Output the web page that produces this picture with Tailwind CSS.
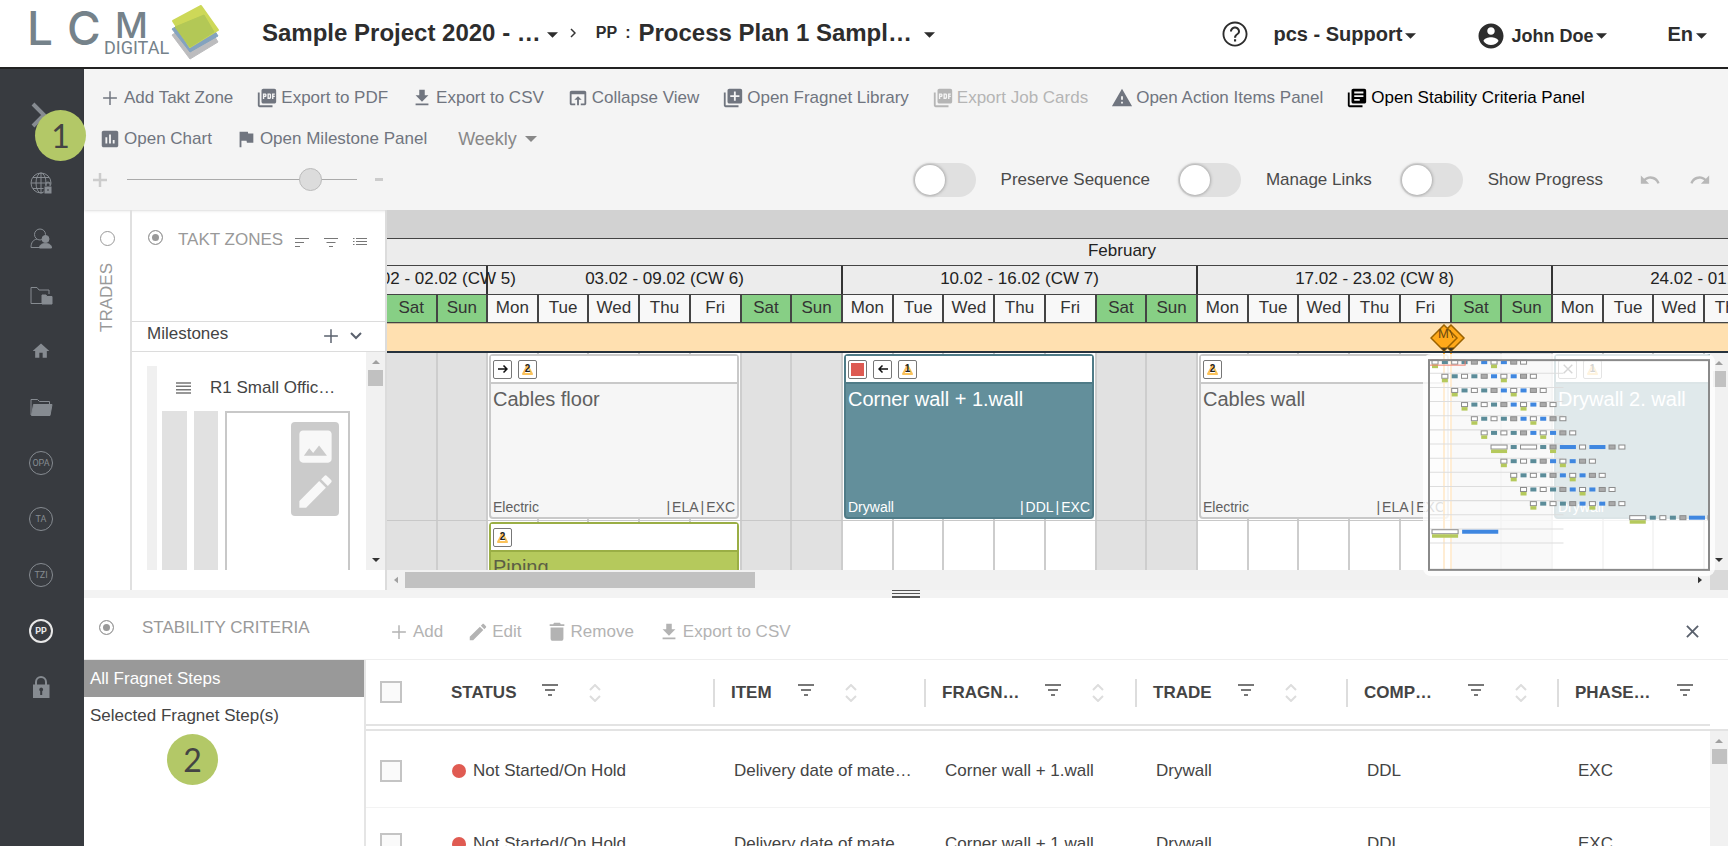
<!DOCTYPE html>
<html lang="en">
<head>
    <meta charset="UTF-8">
    <meta name="viewport" content="width=device-width, initial-scale=1.0">
    <title>LCM Digital - Process Plan</title>
    <script src="https://cdn.jsdelivr.net/npm/@tailwindcss/browser@4"></script>
</head>
<body class="h-screen overflow-hidden flex flex-col bg-white text-[17px] leading-5 text-[#444] font-['Liberation_Sans',Arial,sans-serif]">
    <!-- Icon sprite -->
    <svg class="hidden">
        <symbol id="add" viewBox="0 0 24 24"><path d="M19.500 12.800h-6.700v6.700h-1.600v-6.700H4.500v-1.600h6.700V4.500h1.600v6.700h6.700z"/></symbol>
        <symbol id="pdf" viewBox="0 0 24 24"><path d="M20 2H8c-1.100 0-2 .9-2 2v12c0 1.100.9 2 2 2h12c1.100 0 2-.9 2-2V4c0-1.100-.9-2-2-2zm-8.500 7.500c0 .83-.67 1.500-1.500 1.500H9v2H7.500V7H10c.83 0 1.500.67 1.500 1.500v1zm5 2c0 .83-.67 1.500-1.500 1.500h-2.500V7H15c.83 0 1.500.67 1.500 1.500v3zm4-3H19v1h1.500V11H19v2h-1.500V7h3v1.500zM9 9.500h1v-1H9v1zM4 6H2v14c0 1.100.9 2 2 2h14v-2H4V6zm10 5.500h1v-3h-1v3z"/></symbol>
        <symbol id="download" viewBox="0 0 24 24"><path d="M19 9h-4V3H9v6H5l7 7 7-7zM5 18v2h14v-2H5z"/></symbol>
        <symbol id="collapse" viewBox="0 0 24 24"><path d="M19 4H5c-1.110 0-2 .9-2 2v12c0 1.100.89 2 2 2h4v-2H5V8h14v10h-4v2h4c1.100 0 2-.9 2-2V6c0-1.100-.89-2-2-2zm-7 6l-4 4h3v6h2v-6h3l-4-4z"/></symbol>
        <symbol id="library" viewBox="0 0 24 24"><path d="M4 6H2v14c0 1.100.9 2 2 2h14v-2H4V6zm16-4H8c-1.100 0-2 .9-2 2v12c0 1.100.9 2 2 2h12c1.100 0 2-.9 2-2V4c0-1.100-.9-2-2-2zm-1 9h-4v4h-2v-4H9V9h4V5h2v4h4v2z"/></symbol>
        <symbol id="books" viewBox="0 0 24 24"><path d="M4 6H2v14c0 1.100.9 2 2 2h14v-2H4V6zm16-4H8c-1.100 0-2 .9-2 2v12c0 1.100.9 2 2 2h12c1.100 0 2-.9 2-2V4c0-1.100-.9-2-2-2zm-1 9H9V9h10v2zm-4 4H9v-2h6v2zm4-8H9V5h10v2z"/></symbol>
        <symbol id="warning" viewBox="0 0 24 24"><path d="M1 21h22L12 2 1 21zm12-3h-2v-2h2v2zm0-4h-2v-4h2v4z"/></symbol>
        <symbol id="chart" viewBox="0 0 24 24"><path d="M19 3H5c-1.100 0-2 .9-2 2v14c0 1.100.9 2 2 2h14c1.100 0 2-.9 2-2V5c0-1.100-.9-2-2-2zM9 17H7v-7h2v7zm4 0h-2V7h2v10zm4 0h-2v-4h2v4z"/></symbol>
        <symbol id="flag" viewBox="0 0 24 24"><path d="M14.400 6L14 4H5v17h2v-7h5.600l.4 2h7V6z"/></symbol>
        <symbol id="help" viewBox="0 0 24 24"><path d="M11.200 18h1.700v-1.900h-1.700V18zM12 2C6.480 2 2 6.480 2 12s4.480 10 10 10 10-4.480 10-10S17.520 2 12 2zm0 18.500c-4.700 0-8.500-3.800-8.500-8.500S7.300 3.500 12 3.500s8.500 3.800 8.500 8.500-3.800 8.500-8.500 8.500zM12 6c-2.210 0-4 1.790-4 4h1.600c0-1.300 1.100-2.400 2.400-2.400s2.400 1.100 2.400 2.400c0 2-3.200 1.900-3.200 5h1.700c0-2.250 3.100-2.500 3.100-5 0-2.210-1.790-4-4-4z"/></symbol>
        <symbol id="account" viewBox="0 0 24 24"><path d="M12 2C6.480 2 2 6.480 2 12s4.480 10 10 10 10-4.480 10-10S17.520 2 12 2zm0 3c1.660 0 3 1.340 3 3s-1.340 3-3 3-3-1.340-3-3 1.340-3 3-3zm0 14.200c-2.500 0-4.710-1.280-6-3.220.03-1.990 4-3.080 6-3.080 1.990 0 5.970 1.090 6 3.080-1.290 1.940-3.500 3.220-6 3.220z"/></symbol>
        <symbol id="undo" viewBox="0 0 24 24"><path d="M12.500 8c-2.650 0-5.050.99-6.900 2.600L2 7v9h9l-3.620-3.620c1.390-1.160 3.160-1.880 5.120-1.880 3.540 0 6.550 2.310 7.600 5.500l2.370-.78C21.080 11.030 17.150 8 12.500 8z"/></symbol>
        <symbol id="redo" viewBox="0 0 24 24"><path d="M18.400 10.600C16.550 8.990 14.150 8 11.500 8c-4.650 0-8.580 3.030-9.960 7.220L3.900 16c1.050-3.190 4.050-5.500 7.600-5.500 1.950 0 3.730.72 5.120 1.880L13 16h9V7l-3.600 3.600z"/></symbol>
        <symbol id="edit" viewBox="0 0 24 24"><path d="M3 17.250V21h3.750L17.810 9.940l-3.750-3.750L3 17.250zM20.710 7.040c.39-.39.39-1.020 0-1.410l-2.340-2.340c-.39-.39-1.020-.39-1.410 0l-1.830 1.830 3.750 3.750 1.830-1.830z"/></symbol>
        <symbol id="trash" viewBox="0 0 24 24"><path d="M5 19c0 1.600.9 2.500 2.400 2.500h9.200c1.500 0 2.400-.9 2.400-2.500V7H5v12zM20 3.500h-3.800L15.200 2H8.800l-1 1.500H4v2h16z"/></symbol>
        <symbol id="image" viewBox="0 0 24 24"><path d="M21 19V5c0-1.100-.9-2-2-2H5c-1.100 0-2 .9-2 2v14c0 1.100.9 2 2 2h14c1.100 0 2-.9 2-2zM5.500 17.200l3-4.200 2.200 2.600 3.300-4.100 4.400 5.700z"/></symbol>
        <symbol id="home" viewBox="0 0 24 24"><path d="M10 20v-6h4v6h5v-8h3L12 3 2 12h3v8z"/></symbol>
        <symbol id="caret" viewBox="0 0 12 6"><path d="M0 0h12L6 6z"/></symbol>
        <symbol id="caret-left" viewBox="0 0 6 10"><path d="M6 0v10L0 5z"/></symbol>
        <symbol id="filter" viewBox="0 0 16 12"><path d="M0 0h16v2H0zM3 5h10v2H3zM6 10h4v2H6z"/></symbol>
        <symbol id="sort" viewBox="0 0 12 18"><path d="M1 6l5-5 5 5M1 12l5 5 5-5" fill="none" stroke="currentColor" stroke-width="2"/></symbol>
        <symbol id="close" viewBox="0 0 14 14"><path d="M1 1l12 12M13 1L1 13" fill="none" stroke="currentColor" stroke-width="2"/></symbol>
        <symbol id="alert" viewBox="0 0 13 13"><path d="M6.500 2.500L11 11H2z" fill="none" stroke="#fbc25a" stroke-width="2" stroke-linejoin="round"/></symbol>
    </svg>

    <header class="h-[69px] shrink-0 flex items-center pr-[21px] pb-0.5 border-b-2 border-[#222] text-[#2d2d2d] font-bold">
        <a href="#" aria-label="LCM Digital" class="w-[262px] shrink-0 h-[60px]">
            <svg viewBox="0 2 262 60" class="w-[262px] h-[60px]">
                <path d="M172 34L202 15L218 41L190 58Z" fill="#bcbcbe" stroke="#bcbcbe" stroke-linejoin="round"/>
                <path d="M172 28L202 10L218 35L190 51Z" fill="#84a3bf" stroke="#84a3bf" stroke-linejoin="round"/>
                <path d="M173 20L201 5L218 29L190 46Z" fill="#cdd858" stroke="#cdd858" stroke-width="2" stroke-linejoin="round"/>
                <path d="M175 26L204 14L214 31L190 46Z" fill="#b3c856" stroke="#b3c856" stroke-linejoin="round"/>
                <g fill="#75828a" class="font-['Inter',sans-serif] font-medium">
                    <text x="27" y="44" font-size="46">L</text>
                    <text x="67" y="44" font-size="46">C</text>
                    <text x="115" y="37" font-size="36">M</text>
                    <text x="104" y="53" font-size="18" class="font-['Roboto',sans-serif] font-normal">DIGITAL</text>
                </g>
            </svg>
        </a>
        <button class="flex items-center gap-1.5 text-2xl">Sample Project 2020 - … <svg class="w-[11px] h-1.5 mt-1 fill-current"><use href="#caret"/></svg></button>
        <svg viewBox="0 0 6 10" class="w-1.5 h-2.5 ml-3 mr-5"><path d="M1 1l4 4-4 4" fill="none" stroke="#333" stroke-width="1.500"/></svg>
        <span class="flex gap-2 mr-2 text-base">PP <span>:</span></span>
        <button class="flex items-center gap-3 text-2xl">Process Plan 1 Sampl… <svg class="w-[11px] h-1.5 mt-1 fill-current"><use href="#caret"/></svg></button>
        <div class="ml-auto flex items-center gap-15 pt-0.5">
            <div class="flex items-center gap-6">
                <button aria-label="Help"><svg class="size-[30px] fill-current"><use href="#help"/></svg></button>
                <button class="flex items-center gap-[3px] text-xl">pcs - Support <svg class="w-[11px] h-1.5 mt-1 fill-current"><use href="#caret"/></svg></button>
            </div>
            <button class="flex items-center gap-[3px] text-lg pt-1"><svg class="size-[30px] mr-0.5 fill-current"><use href="#account"/></svg>John Doe <svg class="w-[11px] h-1.5 fill-current"><use href="#caret"/></svg></button>
            <button class="flex items-center gap-[3px] text-xl">En <svg class="w-[11px] h-1.5 mt-1 fill-current"><use href="#caret"/></svg></button>
        </div>
    </header>

    <div class="flex-1 min-h-0 flex relative">
        <!-- Sidebar -->
        <nav class="w-[84px] shrink-0 bg-[#383b40] flex flex-col items-center gap-8 pt-[34px] pr-0.5 text-[#868b91]">
            <a href="#" aria-label="Expand" class="h-6 flex items-center"><svg viewBox="0 0 16 26" class="w-4 h-[26px] mr-1"><path d="M2 2l11 11L2 24" fill="none" stroke="currentColor" stroke-width="4"/></svg></a>
            <div class="flex flex-col gap-8 pt-3">
                <a href="#" aria-label="World"><svg viewBox="0 0 24 24" class="size-6" fill="none" stroke="currentColor"><circle cx="12" cy="12" r="10"/><ellipse cx="12" cy="12" rx="5" ry="10"/><path d="M12 2v20M2 12h20M4 6.500h16M4 17.500h16"/><path d="M15 15h8v8h-8z" fill="currentColor" stroke="#383b40"/><path d="M17 15v-2a2 2 0 0 1 4 0v2"/><path d="M19 18v2" stroke="#383b40"/></svg></a>
                <a href="#" aria-label="Users"><svg viewBox="0 0 24 24" class="size-6" fill="none" stroke="currentColor"><circle cx="11" cy="7.500" r="5.500"/><path d="M12 20.500H2c0-5 2-7.500 6-8.500"/><circle cx="16.500" cy="12" r="3.500" fill="currentColor"/><path d="M10.500 21c0-3.500 3-4.500 6-4.500s6 1 6 4.500z" fill="currentColor"/></svg></a>
                <a href="#" aria-label="Folders"><svg viewBox="0 0 24 24" class="size-6" fill="none" stroke="currentColor"><path d="M13 20.500H2v-16h6l2 2.500h10v4"/><path d="M13 12h4l1 1.500h5V21H13z" fill="currentColor"/></svg></a>
                <a href="#" aria-label="Home"><svg class="size-6 p-0.5 fill-current"><use href="#home"/></svg></a>
                <a href="#" aria-label="Files"><svg viewBox="0 0 24 24" class="size-6" fill="none" stroke="currentColor"><path d="M2 20V4.500h6.500l2 2h10V9"/><path d="M4.500 9.500h18.500L21 20.500H2.500z" fill="currentColor"/></svg></a>
                <a href="#" class="size-6 rounded-full border border-current flex items-center justify-center text-[9px] leading-none font-['Roboto',sans-serif]">OPA</a>
                <a href="#" class="size-6 rounded-full border border-current flex items-center justify-center text-[9px] leading-none font-['Roboto',sans-serif]">TA</a>
                <a href="#" class="size-6 rounded-full border border-current flex items-center justify-center text-[9px] leading-none font-['Roboto',sans-serif]">TZI</a>
                <a href="#" class="size-6 rounded-full border-2 border-current flex items-center justify-center text-[9px] leading-none font-bold text-[#e8e8e8] font-['Roboto',sans-serif]">PP</a>
                <a href="#" aria-label="Lock"><svg viewBox="0 0 24 24" class="size-6"><path d="M7 11V7a5 5 0 0 1 10 0v4" fill="none" stroke="currentColor" stroke-width="2"/><path d="M4 9.500h16.500V23H4z" fill="currentColor"/><path d="M12.200 12.500a2 2 0 0 1 1 3.700V20h-2v-3.800a2 2 0 0 1 1-3.700z" fill="#383b40"/></svg></a>
            </div>
        </nav>
        <span class="absolute z-10 left-[35px] top-[41px] size-[51px] rounded-full bg-[#b3c867] flex items-center justify-center text-[32px] text-[#444] font-['Lato',sans-serif]">1</span>

        <main class="flex-1 min-w-0 flex flex-col">
            <!-- Toolbar -->
            <section class="shrink-0 bg-[#f4f4f4] pt-2 pb-2.5 px-[15px] text-[#70757f] shadow-sm">
                <div class="flex flex-wrap gap-x-[23px]">
                    <button class="h-[41px] flex items-center gap-[3px]"><svg class="size-[22px] fill-current"><use href="#add"/></svg>Add Takt Zone</button>
                    <button class="h-[41px] flex items-center gap-[3px]"><svg class="size-[22px] fill-current"><use href="#pdf"/></svg>Export to PDF</button>
                    <button class="h-[41px] flex items-center gap-[3px]"><svg class="size-[22px] fill-current"><use href="#download"/></svg>Export to CSV</button>
                    <button class="h-[41px] flex items-center gap-[3px]"><svg class="size-[22px] fill-current"><use href="#collapse"/></svg>Collapse View</button>
                    <button class="h-[41px] flex items-center gap-[3px]"><svg class="size-[22px] fill-current"><use href="#library"/></svg>Open Fragnet Library</button>
                    <button class="h-[41px] flex items-center gap-[3px] text-[#b5b5b5]" disabled><svg class="size-[22px] fill-current"><use href="#pdf"/></svg>Export Job Cards</button>
                    <button class="h-[41px] flex items-center gap-[3px]"><svg class="size-[22px] fill-current"><use href="#warning"/></svg>Open Action Items Panel</button>
                    <button class="h-[41px] flex items-center gap-[3px] text-black"><svg class="size-[22px] fill-current"><use href="#books"/></svg>Open Stability Criteria Panel</button>
                    <button class="h-[41px] flex items-center gap-[3px]"><svg class="size-[22px] fill-current"><use href="#chart"/></svg>Open Chart</button>
                    <button class="h-[41px] flex items-center gap-[3px]"><svg class="size-[22px] fill-current"><use href="#flag"/></svg>Open Milestone Panel</button>
                    <div class="h-[41px] flex items-center gap-2 pl-2 text-lg text-[#888]">
                        <select aria-label="Time scale" class="appearance-none bg-transparent"><option>Weekly</option></select>
                        <svg class="w-3 h-1.5 fill-current"><use href="#caret"/></svg>
                    </div>
                </div>
                <div class="h-[41px] flex items-center">
                    <button aria-label="Zoom in" class="-ml-2 mr-[18px] text-[#ccc]"><svg viewBox="0 0 14 14" class="w-[18px] h-3.5"><path d="M7 0v14M0 7h14" stroke="currentColor" stroke-width="2.500"/></svg></button>
                    <input type="range" aria-label="Zoom" value="83" class="w-[230px] h-px appearance-none bg-[#aaa] [&::-webkit-slider-thumb]:appearance-none [&::-webkit-slider-thumb]:size-[23px] [&::-webkit-slider-thumb]:rounded-full [&::-webkit-slider-thumb]:bg-[#dcdcdc] [&::-webkit-slider-thumb]:border [&::-webkit-slider-thumb]:border-[#bbb]">
                    <button aria-label="Zoom out" class="ml-[18px]"><span class="block w-2 h-[3px] bg-[#ccc]"></span></button>
                    <div class="ml-auto flex items-center gap-7 text-[#4a4a4a]">
                        <label class="flex items-center gap-[25px]"><input type="checkbox" class="appearance-none w-[63px] h-[34px] rounded-full bg-[#e0e0e0] p-0.5 before:block before:size-[30px] before:rounded-full before:bg-white before:shadow-[0_0_3px_1px_#aaa]">Preserve Sequence</label>
                        <label class="flex items-center gap-[25px]"><input type="checkbox" class="appearance-none w-[63px] h-[34px] rounded-full bg-[#e0e0e0] p-0.5 before:block before:size-[30px] before:rounded-full before:bg-white before:shadow-[0_0_3px_1px_#aaa]">Manage Links</label>
                        <label class="flex items-center gap-[25px]"><input type="checkbox" class="appearance-none w-[63px] h-[34px] rounded-full bg-[#e0e0e0] p-0.5 before:block before:size-[30px] before:rounded-full before:bg-white before:shadow-[0_0_3px_1px_#aaa]">Show Progress</label>
                        <div class="flex gap-7 pl-2 pr-0.5 text-[#b8b8b8]">
                            <button aria-label="Undo"><svg class="size-[22px] fill-current"><use href="#undo"/></svg></button>
                            <button aria-label="Redo"><svg class="size-[22px] fill-current"><use href="#redo"/></svg></button>
                        </div>
                    </div>
                </div>
            </section>

            <!-- Plan -->
            <section class="h-[380px] shrink-0 flex">
                <div class="w-12 shrink-0 border-r-2 border-[#e0e0e0] flex flex-col items-center pt-[21px] gap-[17px] text-[#999]">
                    <input type="radio" name="pane" id="trades" class="appearance-none size-[15px] shrink-0 rounded-full border border-[#999]">
                    <label for="trades" class="[writing-mode:vertical-rl] rotate-180">TRADES</label>
                </div>

                <div class="w-[255px] shrink-0 border-r-2 border-[#dcdcdc] flex flex-col">
                    <div class="h-[111px] shrink-0 flex items-start pl-4 pt-5 text-[#999]">
                        <input type="radio" name="pane" id="takt" checked class="appearance-none size-[15px] mr-[15px] rounded-full border border-[#999] checked:bg-[#999] checked:shadow-[inset_0_0_0_3px_white]">
                        <label for="takt">TAKT ZONES</label>
                        <div class="flex gap-[15px] ml-3 pt-2 text-[#777]">
                            <button aria-label="Sort"><svg viewBox="0 0 14 9" class="w-3.5 h-[9px]"><path d="M0 .5h14M0 4.500h9M0 8.500h5" stroke="currentColor"/></svg></button>
                            <button aria-label="Filter"><svg viewBox="0 0 14 9" class="w-3.5 h-[9px]"><path d="M0 .5h14M2.500 4.500h9M5 8.500h4" stroke="currentColor"/></svg></button>
                            <button aria-label="List"><svg viewBox="0 0 14 9" class="w-3.5 h-[9px] -mt-px"><path d="M0 .5h1.500M3 .5h11M0 3.500h1.500M3 3.500h11M0 6.500h1.500M3 6.500h11" stroke="currentColor"/></svg></button>
                        </div>
                    </div>
                    <div class="h-[31px] shrink-0 flex items-center pl-[15px] pr-[23px] pb-1.5 border-y border-[#dcdcdc]">
                        Milestones
                        <button aria-label="Add milestone" class="ml-auto mr-2 mt-1 text-[#5a616d]"><svg class="size-[22px] fill-current"><use href="#add"/></svg></button>
                        <button aria-label="Toggle milestones" class="mt-1 text-[#5a616d]"><svg viewBox="0 0 12 8" class="w-3 h-2"><path d="M1 1l5 5 5-5" fill="none" stroke="currentColor" stroke-width="2"/></svg></button>
                    </div>
                    <div class="flex-1 flex mb-5">
                        <div class="flex-1 flex pl-[15px] pt-[14px]">
                            <div class="w-2.5 bg-[#f0f0f0]"></div>
                            <div class="flex-1 flex flex-col pl-[5px] pr-4">
                                <div class="h-[45px] flex items-center pb-0.5 pl-3.5 gap-[19px]">
                                    <svg viewBox="0 0 15 12" class="w-[15px] h-3"><path d="M0 1h15M0 4.300h15M0 7.700h15M0 11h15" stroke="#777" stroke-width="1.500"/></svg>
                                    <span>R1 Small Offic…</span>
                                </div>
                                <div class="flex-1 flex gap-[7px]">
                                    <div class="w-[25px] bg-[#e1e1e1]"></div>
                                    <div class="w-6 bg-[#e1e1e1]"></div>
                                    <div class="w-[125px] border-2 border-b-0 border-[#c8c8c8] flex justify-end items-start pt-[9px] pr-[9px]">
                                        <div class="w-12 rounded bg-[#cbcbcb] flex flex-col items-center gap-0.5 py-[3px] text-[#f8f8f8]">
                                            <button aria-label="Picture"><svg class="block size-[43px] fill-current"><use href="#image"/></svg></button>
                                            <button aria-label="Edit zone"><svg class="block size-[43px] fill-current"><use href="#edit"/></svg></button>
                                        </div>
                                    </div>
                                </div>
                            </div>
                        </div>
                        <div class="w-[19px] bg-[#f1f1f1] flex flex-col items-center pt-2 pb-2">
                            <svg class="w-2 h-1 fill-[#a0a0a0] rotate-180"><use href="#caret"/></svg>
                            <div class="w-[15px] h-4 mt-1.5 bg-[#c1c1c1]"></div>
                            <svg class="w-2 h-1 fill-[#333] mt-auto"><use href="#caret"/></svg>
                        </div>
                    </div>
                </div>

                <!-- Timeline -->
                <div class="flex-1 min-w-0 flex flex-col relative">
                    <div class="overflow-hidden text-[#222]">
                        <div class="h-7 bg-[#d2d2d2]"></div>
                        <div class="w-[1470px] h-7 border-y border-[#444] bg-[#ececec] flex items-center justify-center pb-0.5">February</div>
                        <div id="weeks" class="h-7 flex"></div>
                        <div id="days" class="h-[29px] flex"></div>
                        <div class="h-7 bg-[#ffe0b0] border-t border-[#c9b48f]"></div>
                        <div class="h-0.5 bg-[#26323d]"></div>
                    </div>
                    <div class="flex-1 flex min-h-0">
                        <div class="flex-1 min-w-0 relative overflow-hidden">
                            <div id="columns" class="absolute inset-0 flex"></div>
                            <div class="relative h-[168px] flex border-b border-[#c8c8c8]">
                                <div class="w-[101px] shrink-0"></div>
                                <div class="w-[355px] shrink-0 pl-px pt-px pb-px">
                                    <article class="w-[250px] h-full rounded-sm border-2 border-[#c9c9c9] bg-[#f6f6f6] text-[#606060] flex flex-col">
                                        <div class="h-7 bg-white border-b-2 border-[#c9c9c9] flex items-center gap-1.5 px-0.5">
                                            <span class="size-[19px] border border-[#777] rounded-xs flex items-center justify-center"><svg viewBox="0 0 10 8" class="w-2.5 h-2"><path d="M0 4h9M5.500 .5L9 4L5.500 7.500" fill="none" stroke="#111" stroke-width="1.500"/></svg></span>
                                            <span class="size-[19px] border border-[#777] rounded-xs grid place-items-center text-[10px] leading-none font-bold text-[#222]"><svg class="size-[13px] col-start-1 row-start-1"><use href="#alert"/></svg><b class="col-start-1 row-start-1">2</b></span>
                                        </div>
                                        <h3 class="px-0.5 pt-[5px] text-xl leading-5">Cables floor</h3>
                                        <div class="mt-auto flex justify-between px-0.5 text-sm"><span>Electric</span><span class="flex gap-0.5"><i class="not-italic">|</i>ELA<i class="not-italic">|</i>EXC</span></div>
                                    </article>
                                </div>
                                <div class="w-[355px] shrink-0 pl-px pt-px pb-px">
                                    <article class="w-[250px] h-full rounded-sm border-2 border-[#4f7b87] bg-[#638f9b] text-white flex flex-col">
                                        <div class="h-7 bg-white border-b-2 border-[#4f7b87] flex items-center gap-1.5 px-0.5">
                                            <span class="size-[19px] border border-[#777] rounded-xs flex items-center justify-center"><i class="size-[13px] bg-[#dd5a52]"></i></span>
                                            <span class="size-[19px] border border-[#777] rounded-xs flex items-center justify-center"><svg viewBox="0 0 10 8" class="w-2.5 h-2"><path d="M10 4H1M4.500 .5L1 4l3.500 3.500" fill="none" stroke="#111" stroke-width="1.500"/></svg></span>
                                            <span class="size-[19px] border border-[#777] rounded-xs grid place-items-center text-[10px] leading-none font-bold text-[#222]"><svg class="size-[13px] col-start-1 row-start-1"><use href="#alert"/></svg><b class="col-start-1 row-start-1">1</b></span>
                                        </div>
                                        <h3 class="px-0.5 pt-[5px] text-xl leading-5">Corner wall + 1.wall</h3>
                                        <div class="mt-auto flex justify-between px-0.5 text-sm"><span>Drywall</span><span class="flex gap-0.5"><i class="not-italic">|</i>DDL<i class="not-italic">|</i>EXC</span></div>
                                    </article>
                                </div>
                                <div class="w-[355px] shrink-0 pl-px pt-px pb-px">
                                    <article class="w-[250px] h-full rounded-sm border-2 border-[#c9c9c9] bg-[#f6f6f6] text-[#606060] flex flex-col">
                                        <div class="h-7 bg-white border-b-2 border-[#c9c9c9] flex items-center gap-1.5 px-0.5">
                                            <span class="size-[19px] border border-[#777] rounded-xs grid place-items-center text-[10px] leading-none font-bold text-[#222]"><svg class="size-[13px] col-start-1 row-start-1"><use href="#alert"/></svg><b class="col-start-1 row-start-1">2</b></span>
                                        </div>
                                        <h3 class="px-0.5 pt-[5px] text-xl leading-5">Cables wall</h3>
                                        <div class="mt-auto flex justify-between px-0.5 text-sm"><span>Electric</span><span class="flex gap-0.5"><i class="not-italic">|</i>ELA<i class="not-italic">|</i>EXC</span></div>
                                    </article>
                                </div>
                                <div class="w-[355px] shrink-0 pl-px pt-px pb-px">
                                    <article class="w-[250px] h-full rounded-sm border-2 border-[#4f7b87] bg-[#638f9b] text-white flex flex-col">
                                        <div class="h-7 bg-white border-b-2 border-[#4f7b87] flex items-center gap-1.5 px-0.5">
                                            <span class="size-[19px] border border-[#777] rounded-xs flex items-center justify-center text-[#333]"><svg class="size-2.5"><use href="#close"/></svg></span>
                                            <span class="size-[19px] border border-[#777] rounded-xs grid place-items-center text-[10px] leading-none font-bold text-[#222]"><svg class="size-[13px] col-start-1 row-start-1"><use href="#alert"/></svg><b class="col-start-1 row-start-1">1</b></span>
                                        </div>
                                        <h3 class="px-0.5 pt-[5px] text-xl leading-5">Drywall 2. wall</h3>
                                        <div class="mt-auto px-0.5 text-sm">Drywall</div>
                                    </article>
                                </div>
                            </div>
                            <div class="relative flex pl-[102px] pt-px">
                                <article class="w-[250px] h-[165px] rounded-sm border-2 border-[#9aae45] bg-[#b5c95c] text-[#5c5f45]">
                                    <div class="h-7 bg-white border-b-2 border-[#9aae45] flex items-center px-0.5">
                                        <span class="size-[19px] border border-[#777] rounded-xs grid place-items-center text-[10px] leading-none font-bold text-[#222]"><svg class="size-[13px] col-start-1 row-start-1"><use href="#alert"/></svg><b class="col-start-1 row-start-1">2</b></span>
                                    </div>
                                    <h3 class="px-0.5 pt-[5px] text-xl leading-5">Piping</h3>
                                </article>
                            </div>
                            <!-- milestone guide lines -->
                            <div class="absolute inset-y-0 left-[1056px] w-[9px] border-x-2 border-[#ffa726]"></div>
                        </div>
                        <div class="w-[18px] bg-[#f1f1f1] flex flex-col items-center pt-2 pb-2">
                            <svg class="w-2 h-1 fill-[#a0a0a0] rotate-180"><use href="#caret"/></svg>
                            <div class="w-[13px] h-4 mt-1.5 bg-[#c1c1c1]"></div>
                            <svg class="w-2 h-1 fill-[#333] mt-auto"><use href="#caret"/></svg>
                        </div>
                    </div>
                    <div class="h-5 flex items-center bg-[#f1f1f1]">
                        <svg class="w-1 h-2 ml-[7px] fill-[#a0a0a0]"><use href="#caret-left"/></svg>
                        <div class="w-[350px] h-4 ml-[7px] bg-[#c1c1c1]"></div>
                        <svg class="w-1 h-2 ml-auto mr-2 fill-[#333] rotate-180"><use href="#caret-left"/></svg>
                        <div class="w-[18px] h-full bg-[#d9d9d9]"></div>
                    </div>
                    <!-- milestone markers -->
                    <svg viewBox="0 0 36 28" class="absolute left-[1043px] top-[114px] w-9 h-7 text-sm">
                        <path d="M21 1l13 13-13 13L8 14z" fill="#ffa91a" stroke="#9a6200" stroke-width="1.500"/>
                        <path d="M14 1l13 13-13 13L1 14z" fill="#ffa91a" stroke="#9a6200" stroke-width="1.500"/>
                        <text x="8" y="14" fill="#6b4a10" font-size="13">M</text>
                        <path d="M20 6l3 8M11 24h6l-3 3zM18 24h6l-3 3z" fill="#333" stroke="#6b4a10"/>
                    </svg>
                    <!-- minimap -->
                    <div class="absolute right-[13px] top-[144px] w-[292px] h-[222px] rounded-lg bg-white/80 p-[5px]">
                        <svg id="minimap" viewBox="0 0 281 211" class="w-full h-full"></svg>
                    </div>
                </div>
            </section>

            <div class="h-2 shrink-0 bg-[#f3f3f3] flex flex-col items-center gap-0.5">
                <div class="w-7 h-px shrink-0 bg-[#555]"></div>
                <div class="w-7 h-px shrink-0 bg-[#555]"></div>
                <div class="w-7 h-0.5 shrink-0 bg-[#555]"></div>
            </div>

            <!-- Stability criteria -->
            <section class="flex-1 min-h-0 flex flex-col">
                <div class="h-[62px] shrink-0 flex items-center border-b border-[#eee]">
                    <div class="w-[304px] flex items-center gap-7 pb-0.5 pl-[15px] text-[#999]">
                        <input type="radio" name="panel" id="stability" checked class="appearance-none size-[15px] rounded-full border border-[#999] checked:bg-[#999] checked:shadow-[inset_0_0_0_3px_white]">
                        <label for="stability">STABILITY CRITERIA</label>
                    </div>
                    <div class="flex gap-6 pt-1.5 text-[#b3b3b3]">
                        <button class="flex items-center gap-[3px]" disabled><svg class="size-[22px] fill-current"><use href="#add"/></svg>Add</button>
                        <button class="flex items-center gap-[3px]" disabled><svg class="size-[22px] fill-current"><use href="#edit"/></svg>Edit</button>
                        <button class="flex items-center gap-[3px]" disabled><svg class="size-[22px] fill-current"><use href="#trash"/></svg>Remove</button>
                        <button class="flex items-center gap-[3px]" disabled><svg class="size-[22px] fill-current"><use href="#download"/></svg>Export to CSV</button>
                    </div>
                    <button aria-label="Close panel" class="ml-auto mr-[29px] pt-1.5 text-[#5a616d]"><svg class="w-[13px] h-[13px]"><use href="#close"/></svg></button>
                </div>
                <div class="flex-1 min-h-0 flex">
                    <div class="w-[282px] shrink-0 border-r-2 border-[#e5e5e5] relative">
                        <a href="#" class="h-[37px] px-1.5 flex items-center bg-[#999] text-white">All Fragnet Steps</a>
                        <a href="#" class="h-[37px] px-1.5 flex items-center">Selected Fragnet Step(s)</a>
                        <span class="absolute left-[83px] top-[74px] size-[51px] rounded-full bg-[#b3c867] flex items-center justify-center text-[32px] text-[#444] font-['Lato',sans-serif]">2</span>
                    </div>
                    <div class="flex-1 min-w-0 overflow-hidden">
                        <table class="w-full table-fixed border-separate border-spacing-0 text-left whitespace-nowrap">
                            <colgroup>
                                <col class="w-[69px]"><col class="w-[280px]"><col class="w-[211px]"><col class="w-[211px]"><col class="w-[211px]"><col class="w-[211px]"><col><col class="w-[18px]">
                            </colgroup>
                            <thead>
                                <tr id="head"></tr>
                                <tr><td colspan="8" class="h-[5px] border-b-2 border-[#e3e3e3]"></td></tr>
                            </thead>
                            <tbody id="rows"></tbody>
                        </table>
                    </div>
                </div>
            </section>
        </main>
    </div>

    <script>
    const weeks = ['01.02 - 02.02 (CW 5)', '03.02 - 09.02 (CW 6)', '10.02 - 16.02 (CW 7)', '17.02 - 23.02 (CW 8)', '24.02 - 01.03 (CW 9)'];
    const dayNames = ['Mon', 'Tue', 'Wed', 'Thu', 'Fri', 'Sat', 'Sun'];

    weeks.forEach((week, i) => {
        // the month starts on a Saturday
        const names = i === 0 ? dayNames.slice(5) : dayNames;
        const grid = i === 0 ? 'w-[101px] shrink-0 grid grid-cols-2' : 'w-[355px] shrink-0 grid grid-cols-7';
        const weekWidth = i === 0 ? 'w-[101px]' : 'w-[355px]';

        document.getElementById('weeks').innerHTML +=
            `<div class="${weekWidth} shrink-0 flex items-center justify-center pb-0.5 whitespace-nowrap bg-[#ececec] border-r-2 border-[#333]"><span class="relative shrink-0">${week}</span></div>`;

        document.getElementById('days').innerHTML += `<div class="${grid}">` + names.map(name => {
            const bg = name[0] === 'S' ? 'bg-[#87cf85]' : 'bg-[#f8f8f8]';
            return `<div class="${bg} border-r-2 border-y border-[#444] flex items-center justify-center text-[#333] pb-0.5">${name}</div>`;
        }).join('') + '</div>';

        document.getElementById('columns').innerHTML += `<div class="${grid}">` + names.map(name => {
            const bg = name[0] === 'S' ? 'bg-[#e1e1e1]' : 'bg-white';
            return `<div class="${bg} border-r-2 border-[#cdcdcd]"></div>`;
        }).join('') + '</div>';
    });

    // Minimap: w = open, t = teal, g = grey, b = blue
    const fills = { w: '#fff', t: '#5b8c99', g: '#aaa', b: '#3f87e0' };
    const step = 9.8;
    const rowHeight = 14.1;
    let map = '';
    function box(type, x, y, width) {
        const stroke = type === 'w' || type === 'g' ? '#8c8c8c' : 'none';
        map += `<rect x="${x}" y="${y}" width="${width}" height="4" fill="${fills[type]}" stroke="${stroke}"/>`;
    }
    function green(x, y, width) {
        map += `<rect x="${x}" y="${y + 4.500}" width="${width}" height="3.500" fill="#b5c95c"/>`;
    }
    for (let i = 1; i < 14; i++) {
        map += `<path d="M0 ${i * rowHeight}H135" stroke="#ddd"/>`;
    }
    for (let i = 0; i < 11; i++) {
        const y = i * rowHeight + 1;
        const x = 4 + i * step;
        if (i === 6) {
            [['w', 0, 16], ['t', 2, 6], ['w', 3, 16], ['t', 5, 6], ['g', 6, 6], ['b', 7, 16], ['w', 9, 6], ['b', 10, 16], ['g', 12, 6], ['w', 13, 6]]
                .forEach(([type, col, width]) => box(type, x + col * step, y, width));
            green(x, y, 16);
        } else {
            [...'wtwtgbwbgw'].forEach((type, col) => box(type, x + col * step, y, 6));
            green(x, y, 6);
        }
        green(x + 6 * step, y, 6);
    }
    [['w', 201, 16], ['t', 221, 6], ['w', 231, 6], ['t', 241, 6], ['g', 251, 6], ['b', 260, 16], ['w', 279, 6]]
        .forEach(([type, x, width]) => box(type, x, 156, width));
    green(201, 156, 16);
    green(279, 156, 6);
    box('w', 4, 170, 26);
    box('b', 34, 170, 36);
    green(4, 170, 26);
    map += '<rect x="1" y="1" width="36" height="5" fill="none" stroke="#f08070"/>';
    map += '<rect x="1" y="1" width="279" height="209" fill="none" stroke="#8a8a8a" stroke-width="2"/>';
    document.getElementById('minimap').innerHTML = map;

    // Criteria table
    const checkbox = '<input type="checkbox" aria-label="Select" class="block appearance-none size-[22px] ml-3.5 border-2 border-[#c4c4c4] bg-[#fafafa]">';
    const columns = ['STATUS', 'ITEM', 'FRAGN…', 'TRADE', 'COMP…', 'PHASE…'];
    document.getElementById('head').innerHTML =
        `<th class="h-[66px] p-0 border-b-2 border-[#e3e3e3]">${checkbox}</th>` +
        columns.map((name, i) => {
            const line = i < columns.length - 1 ? 'border-r-2 border-[#ddd]' : '';
            const gap = name === 'COMP…' ? 'ml-9' : 'ml-[26px]';
            const sort = i < columns.length - 1 ? '<button aria-label="Sort" class="text-[#ddd]"><svg class="block w-3 h-[18px]"><use href="#sort"/></svg></button>' : '';
            return `<th class="p-0 pt-0.5 border-b-2 border-[#e3e3e3]"><div class="h-7 flex items-center pl-4 ${line}">${name}
                <button aria-label="Filter" class="${gap} mr-[31px] mb-1.5 text-[#777]"><svg class="block w-4 h-3 fill-current"><use href="#filter"/></svg></button>${sort}</div></th>`;
        }).join('') + '<th></th>';

    const row = ['Delivery date of mate…', 'Corner wall + 1.wall', 'Drywall', 'DDL', 'EXC'];
    let rows = `<tr><td colspan="7" class="h-1 p-0"></td><td rowspan="3" class="p-0 bg-[#f1f1f1] align-top"><div class="flex flex-col items-center pt-2">
        <svg class="w-2 h-1 fill-[#a0a0a0] rotate-180"><use href="#caret"/></svg><div class="w-[15px] h-[15px] mt-1.5 bg-[#c1c1c1]"></div></div></td></tr>`;
    for (let i = 0; i < 2; i++) {
        rows += `<tr><td class="h-[73px] p-0 border-b border-[#f3f3f3]">${checkbox}</td>
            <td class="p-0 border-b border-[#f3f3f3]"><div class="flex items-center gap-[7px] pl-[17px]"><i class="size-3.5 rounded-full bg-[#e05b52]"></i>Not Started/On Hold</div></td>` +
            row.map(text => `<td class="p-0 pl-[19px] border-b border-[#f3f3f3]">${text}</td>`).join('') + '</tr>';
    }
    document.getElementById('rows').innerHTML = rows;
    </script>
</body>
</html>
